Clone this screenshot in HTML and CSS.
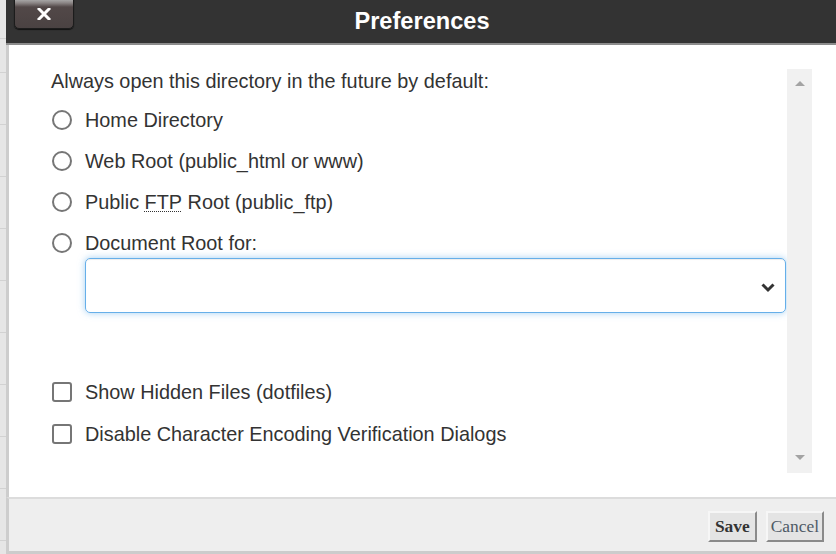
FILE: index.html
```html
<!DOCTYPE html>
<html>
<head>
<meta charset="utf-8">
<title>Preferences</title>
<link rel="stylesheet" href="styles.css">
</head>
<body>
<div class="page">
  <div class="backdrop"></div>
  <div class="dialog">
    <div class="header">
      <button class="close" type="button" aria-label="Close">
        <svg width="14" height="12" viewBox="0 0 14 12"><path d="M2 1 L12 11 M12 1 L2 11" stroke="#fff" stroke-width="3" stroke-linecap="square"/></svg>
      </button>
      <h1 class="title">Preferences</h1>
    </div>
    <div class="main">
      <div class="scroll">
        <div class="content">
          <p class="lead">Always open this directory in the future by default:</p>
          <label class="row"><span class="radio"></span>Home Directory</label>
          <label class="row"><span class="radio"></span>Web Root (public_html or www)</label>
          <label class="row"><span class="radio"></span>Public&nbsp;<abbr title="File Transfer Protocol">FTP</abbr>&nbsp;Root (public_ftp)</label>
          <label class="row"><span class="radio"></span>Document Root for:</label>
          <div class="select">
            <svg width="16" height="12" viewBox="0 0 16 12"><path d="M2.5 3.5 L8 9 L13.5 3.5" fill="none" stroke="#333" stroke-width="3"/></svg>
          </div>
          <label class="row check-first"><span class="check"></span>Show Hidden Files (dotfiles)</label>
          <label class="row"><span class="check"></span>Disable Character Encoding Verification Dialogs</label>
        </div>
        <div class="scrollbar">
          <span class="arrow up"></span>
          <span class="arrow down"></span>
        </div>
      </div>
    </div>
    <div class="footer">
      <button class="btn save" type="button">Save</button>
      <button class="btn cancel" type="button">Cancel</button>
    </div>
  </div>
</div>
</body>
</html>
```

FILE: styles.css
```css
html, body {
  margin: 0;
  padding: 0;
  height: 554px;
  overflow: hidden;
}
body {
  font-family: "Liberation Sans", Arial, sans-serif;
  color: #333;
  background: #e6e6e6;
}
.page {
  display: flex;
  height: 554px;
}
.backdrop {
  width: 6px;
  flex: none;
  background: repeating-linear-gradient(to bottom, #e6e6e6 0, #e6e6e6 20px, #d2d2d2 20px, #d2d2d2 21px, #e6e6e6 21px, #e6e6e6 52px);
  background-position: 0 52px;
}
.dialog {
  flex: 1;
  display: flex;
  flex-direction: column;
}
.header {
  position: relative;
  height: 43px;
  background: #333333;
  border-bottom: 2px solid #8c8c8c;
  display: flex;
  align-items: center;
  justify-content: center;
}
.title {
  margin: 0;
  font-size: 23.6px;
  font-weight: bold;
  color: #fff;
  padding-left: 2px;
}
.close {
  position: absolute;
  left: 8px;
  top: -2px;
  width: 60px;
  height: 31px;
  padding: 0;
  border: 1px solid #1c1c1c;
  border-radius: 0 0 5px 5px;
  background: linear-gradient(to bottom, #b0b0b0 0, #8a8484 4px, #524848 8px, #4a4242 100%);
  box-shadow: 0 1px 1px #111;
  display: flex;
  align-items: flex-start;
  justify-content: center;
  padding-top: 9px;
}
.main {
  height: 452px;
  box-sizing: border-box;
  background: #fff;
  border-left: 3px solid #cdcdcd;
  padding: 24px 24px 24px 42px;
}
.scroll {
  display: flex;
  height: 404px;
}
.content {
  flex: 1;
  display: flex;
  flex-direction: column;
  font-size: 19.85px;
}
.lead {
  margin: 0 0 15px 0;
  line-height: 24px;
  height: 24px;
  white-space: nowrap;
}
.row {
  display: flex;
  align-items: center;
  height: 24px;
  line-height: 24px;
  margin-bottom: 17px;
  white-space: nowrap;
}
.row abbr {
  text-decoration: underline dotted;
  text-underline-offset: 2px;
  text-decoration-thickness: 1px;
}
.radio {
  width: 16px;
  height: 16px;
  border: 2px solid #767676;
  border-radius: 50%;
  margin: 0 13px 0 1px;
  flex: none;
}
.check {
  width: 16px;
  height: 16px;
  border: 2px solid #767676;
  border-radius: 3px;
  margin: 0 13px 0 1px;
  flex: none;
}
.row:nth-of-type(4) {
  margin-bottom: 3px;
}
.select {
  margin-left: 34px;
  margin-right: 1px;
  height: 55px;
  box-sizing: border-box;
  border: 1px solid #66afe9;
  border-radius: 5px;
  box-shadow: inset 0 1px 1px rgba(0,0,0,.075), 0 0 7px rgba(102,175,233,.6);
  display: flex;
  align-items: center;
  justify-content: flex-end;
  padding-right: 9px;
  padding-top: 2px;
}
.check-first {
  margin-top: 67px;
  margin-bottom: 18px;
}
.scrollbar {
  width: 25px;
  flex: none;
  background: #f1f1f1;
  display: flex;
  flex-direction: column;
  justify-content: space-between;
  align-items: center;
  padding: 12px 0 13px;
  box-sizing: border-box;
}
.arrow {
  width: 0;
  height: 0;
  border-left: 5px solid transparent;
  border-right: 5px solid transparent;
}
.arrow.up {
  border-bottom: 5px solid #a3a3a3;
}
.arrow.down {
  border-top: 5px solid #a3a3a3;
}
.footer {
  height: 52px;
  background: #eeeeee;
  border-top: 2px solid #dcdcdc;
  border-left: 3px solid #cdcdcd;
  border-bottom: 3px solid #cccccc;
  display: flex;
  align-items: center;
  justify-content: flex-end;
  gap: 9px;
  padding-right: 12px;
}
.btn {
  font-family: "Liberation Serif", "Times New Roman", serif;
  font-size: 17.4px;
  height: 31px;
  padding: 0 3px;
  background: #e4e4e4;
  border: 2px solid;
  border-color: #f6f6f6 #8a8a8a #8a8a8a #f6f6f6;
  margin-top: 3px;
}
.save {
  font-weight: bold;
  color: #333;
  padding: 0 5px;
}
.cancel {
  color: #4e5a66;
}
```
